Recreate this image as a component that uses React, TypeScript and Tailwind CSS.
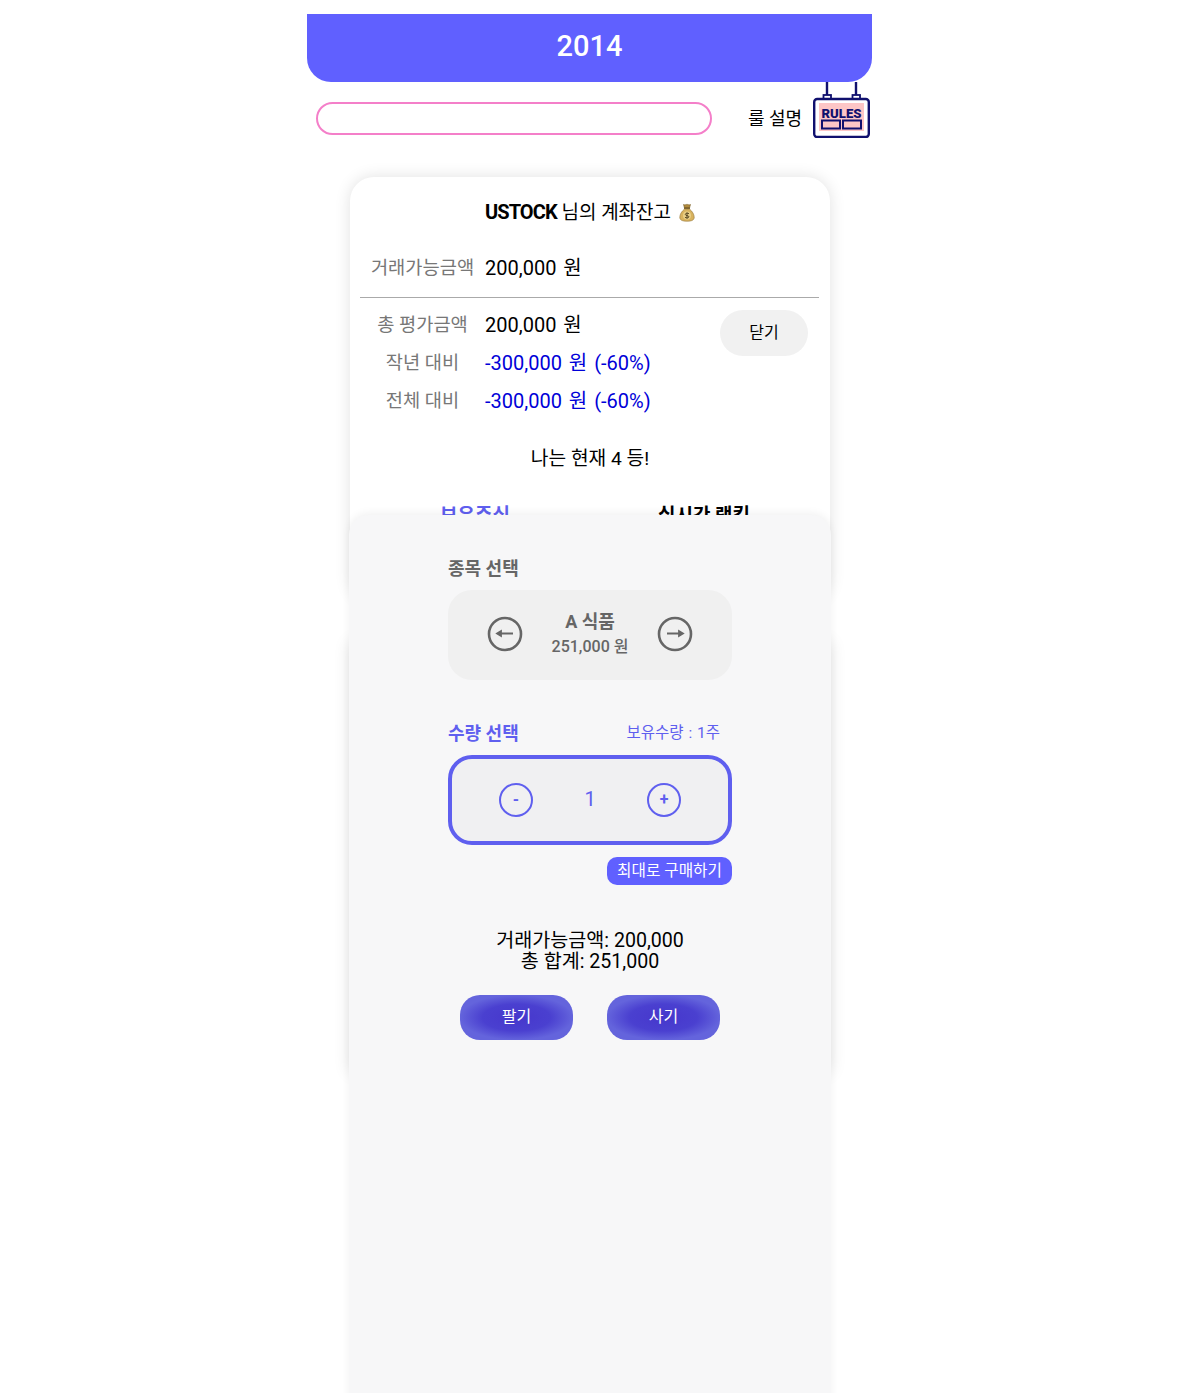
const FONT = "font-['Roboto','Noto_Sans_CJK_KR',sans-serif]";

function RulesIcon() {
  return (
    <svg width="57" height="56" viewBox="0 0 57 56" fill="none" className="block">
      <path d="M14 0V13M43 0V13" stroke="#10106e" strokeWidth="2.4" />
      <rect x="10.5" y="13" width="7.5" height="4" fill="#fff" stroke="#10106e" strokeWidth="1.8" />
      <rect x="39.5" y="13" width="7.5" height="4" fill="#fff" stroke="#10106e" strokeWidth="1.8" />
      <rect x="1.2" y="17" width="54.6" height="38" rx="3" fill="#fff" stroke="#10106e" strokeWidth="2.4" />
      <rect x="6" y="21" width="45" height="28" fill="#fdc6c6" />
      <text x="8.5" y="35.5" textLength="40" lengthAdjust="spacingAndGlyphs" fontSize="13.5" fontWeight="900" fill="#10106e" fontFamily="Roboto, sans-serif">RULES</text>
      <rect x="9" y="38.5" width="18" height="8" stroke="#10106e" strokeWidth="2" />
      <rect x="30" y="38.5" width="18" height="8" stroke="#10106e" strokeWidth="2" />
    </svg>
  );
}

function MoneyBag() {
  return (
    <svg width="16" height="19" viewBox="0 0 16 19" className="block">
      <path d="M4.5 1.5C6 2.5 7 1 8 1.5C9 1 10 2.5 11.5 1.5L10.5 5H5.5Z" fill="#b08a3c" stroke="#7a5f28" strokeWidth="0.6" />
      <rect x="5" y="4.5" width="6" height="1.4" fill="#6e5522" />
      <path d="M5.5 6C2.5 8.5 .8 11.5 .8 14.2C.8 17 3 18.2 8 18.2C13 18.2 15.2 17 15.2 14.2C15.2 11.5 13.5 8.5 10.5 6Z" fill="#d8b25e" stroke="#96773a" strokeWidth="0.6" />
      <circle cx="8" cy="12.5" r="4" fill="#e9cf86" />
      <path d="M10 10.7C9 9.8 6.3 10 6.3 11.4C6.3 13 9.9 12.2 9.9 13.8C9.9 15.1 7.1 15.3 6 14.3M8 9.5V15.6" fill="none" stroke="#4a3a18" strokeWidth="0.9" />
    </svg>
  );
}

function Row({ label, value, blue }: { label: string; value: string; blue?: boolean }) {
  return (
    <div className="flex items-center h-[38px]">
      <span className="w-[125px] pt-[1px] text-center text-[18.7px] text-[#777] whitespace-nowrap">{label}</span>
      <span className={`text-[20px] [word-spacing:2px] whitespace-nowrap ${blue ? "text-[#0000d8]" : "text-black"}`}>{value}</span>
    </div>
  );
}

function ArrowCircle({ dir }: { dir: "left" | "right" }) {
  return (
    <svg width="36" height="36" viewBox="0 0 36 36" fill="none" className="block mb-[2px]">
      <circle cx="18" cy="18" r="16" stroke="#666" strokeWidth="2.6" />
      {dir === "left" ? (
        <path d="M10 17.5H26M10 17.5L14 15V20Z" stroke="#666" strokeWidth="1.8" fill="#666" />
      ) : (
        <path d="M26 17.5H10M26 17.5L22 15V20Z" stroke="#666" strokeWidth="1.8" fill="#666" />
      )}
    </svg>
  );
}

function RoundBtn({ sign }: { sign: string }) {
  return (
    <div className="w-[34px] h-[34px] rounded-full border-[2.5px] border-[#5f5fef] flex items-center justify-center text-[#5f5fef] text-[16px] font-bold leading-none">
      {sign}
    </div>
  );
}

function TradeBtn({ label }: { label: string }) {
  return (
    <button className="w-[113px] h-[45px] pb-[2px] rounded-[20px] text-white text-[16px] bg-[radial-gradient(ellipse_closest-side_at_center,#4637cc_0%,#4a40d0_60%,#6464dc_100%)]">
      {label}
    </button>
  );
}

export default function App() {
  return (
    <div className={`${FONT} relative h-[1393px] w-[1180px] overflow-hidden bg-white`}>
      <div className="mx-auto w-[566px] pt-[14px]">
        {/* Header */}
        <div className="w-[565px] h-[68px] rounded-b-[24px] bg-[#6060ff] flex items-center justify-center pb-[3px] text-white text-[29px] font-medium">
          2014
        </div>

        {/* Search + rules */}
        <div className="h-[56px] flex items-start pl-[9px]">
          <div className="mt-[20px] w-[396px] h-[33px] rounded-full border-2 border-[#f47fc9] bg-white" />
          <span className="mt-[24px] ml-[36px] text-[18px] leading-[26px] text-black whitespace-nowrap">룰 설명</span>
          <div className="ml-[11px]">
            <RulesIcon />
          </div>
        </div>
      </div>

      {/* Balance card */}
      <div className="relative mx-auto mt-[39px] w-[480px] h-[425px] rounded-[24px] bg-white shadow-[0_0_16px_rgba(0,0,0,0.12)] px-[10px]">
        <div className="h-[68px] pt-[2px] flex items-center justify-center gap-[8px] text-[19px]">
          <span><span className="text-[20px] font-bold tracking-[-0.9px]">USTOCK</span> 님의 계좌잔고</span>
          <MoneyBag />
        </div>
        <div className="h-[52px] pt-[4px]">
          <Row label="거래가능금액" value="200,000 원" />
        </div>
        <div className="border-t border-[#aaa] w-[459px] pt-[8px]">
          <Row label="총 평가금액" value="200,000 원" />
          <Row label="작년 대비" value="-300,000 원 (-60%)" blue />
          <Row label="전체 대비" value="-300,000 원 (-60%)" blue />
        </div>
        <button className="absolute left-[370px] top-[133px] w-[88px] h-[46px] rounded-full bg-[#f1f1f1] text-[16px] text-black">
          닫기
        </button>
        <div className="mt-[25px] text-center text-[19.2px] text-black">나는 현재 4 등!</div>
        <div className="mt-[28px] flex text-[19px] font-bold">
          <span className="w-[230px] text-center text-[#5f5fef]">보유주식</span>
          <span className="w-[228px] text-center text-black">실시간 랭킹</span>
        </div>
      </div>

      {/* Second card behind sheet */}
      <div className="mx-auto mt-[40px] w-[480px] h-[430px] bg-white shadow-[0_0_16px_rgba(0,0,0,0.12)]" />

      {/* Trade sheet */}
      <div className="absolute left-[349px] top-[515px] w-[482px] h-[900px] rounded-t-[20px] bg-[#f7f7f8] shadow-[0_-2px_8px_rgba(0,0,0,0.06)] px-[99px] pt-[42px]">
        <div className="text-[18px] font-bold text-[#666] leading-[24px]">종목 선택</div>
        <div className="mt-[9px] h-[90px] w-[284px] rounded-[24px] bg-[#f0f0f0] flex items-center justify-between px-[39px]">
          <ArrowCircle dir="left" />
          <div className="text-center text-[#666] pb-[2px]">
            <div className="text-[18px] font-bold leading-[26px]">A 식품</div>
            <div className="text-[16px] font-medium leading-[24px]">251,000 원</div>
          </div>
          <ArrowCircle dir="right" />
        </div>

        <div className="mt-[41px] w-[284px] flex items-center justify-between pr-[12px]">
          <span className="text-[18px] font-bold text-[#5f5fef] leading-[26px]">수량 선택</span>
          <span className="text-[15.5px] [word-spacing:1px] text-[#5f5fef]">보유수량 : 1주</span>
        </div>
        <div className="mt-[8px] w-[284px] h-[90px] rounded-[24px] border-[4px] border-[#5f5fef] bg-[#f0f0f2] flex items-center justify-between px-[47px]">
          <RoundBtn sign="-" />
          <span className="text-[20px] text-[#5f5fef] pb-[2px]">1</span>
          <RoundBtn sign="+" />
        </div>
        <div className="mt-[12px] w-[284px] flex justify-end">
          <button className="h-[28px] w-[125px] rounded-[10px] bg-[#6060ff] text-white text-[15.7px] whitespace-nowrap">
            최대로 구매하기
          </button>
        </div>

        <div className="mt-[45px] w-[284px] text-center text-[19.6px] leading-[21px] text-black">
          <div>거래가능금액: 200,000</div>
          <div>총 합계: 251,000</div>
        </div>

        <div className="mt-[23px] w-[284px] flex justify-center gap-[34px]">
          <TradeBtn label="팔기" />
          <TradeBtn label="사기" />
        </div>
      </div>
    </div>
  );
}
